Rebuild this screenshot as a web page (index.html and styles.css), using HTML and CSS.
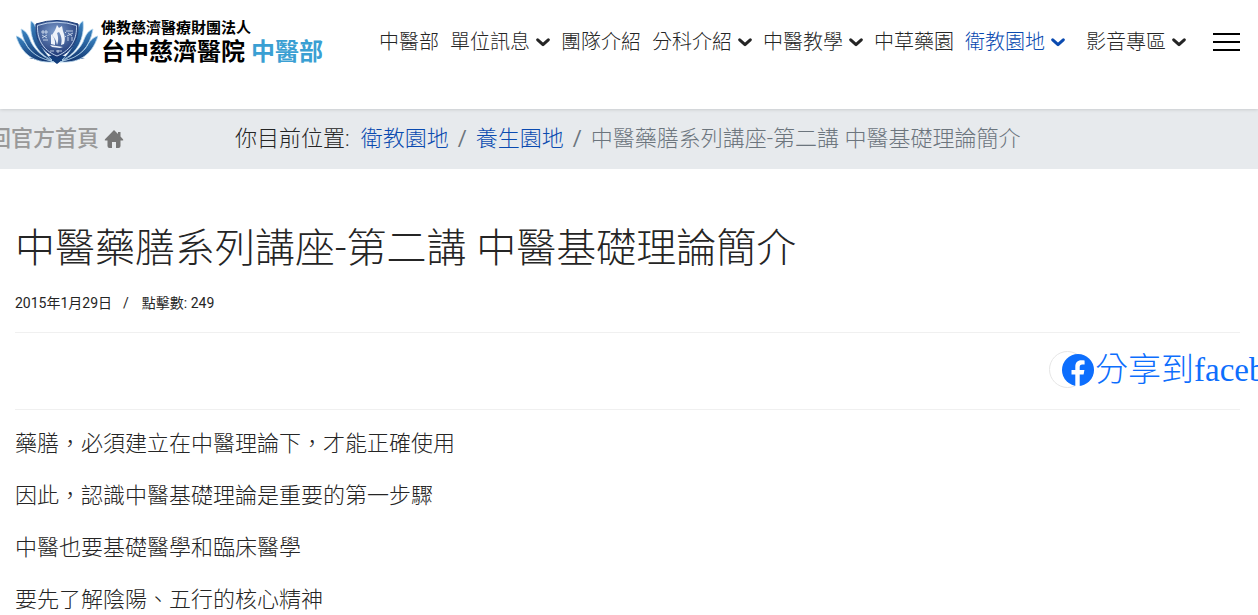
FILE: index.html
```
<!DOCTYPE html>
<html lang="zh-Hant">
  <head>
    <meta charset="UTF-8" />
    <meta name="viewport" content="width=device-width, initial-scale=1.0" />
    <title>中醫藥膳系列講座-第二講 中醫基礎理論簡介</title>
    <link rel="stylesheet" href="styles.css">
  </head>
  <body>
    <svg class="sprite" width="0" height="0" aria-hidden="true">
      <symbol id="chevron" viewBox="0 0 14 9">
        <path d="M1.700 1.800 7 6.700 12.300 1.800" fill="none" stroke="currentColor" stroke-width="3" stroke-linecap="round" stroke-linejoin="round" />
      </symbol>
    </svg>

    <header class="site-header">
      <a class="logo" href="#">
        <svg class="logo-mark" viewBox="0 0 82 44" aria-hidden="true">
          <defs>
            <linearGradient id="petal" x1="0" y1="0" x2="0" y2="1">
              <stop offset="0" stop-color="#3b86c4" />
              <stop offset="1" stop-color="#12356f" />
            </linearGradient>
            <radialGradient id="shield" cx=".45" cy=".3" r=".7">
              <stop offset="0" stop-color="#7b9bcb" />
              <stop offset="1" stop-color="#17306f" />
            </radialGradient>
            <g id="petals">
              <path d="M38 42C22 43 7 38 0 16c5 1 9 6 11 10C15 33 25 38 38 42z" />
              <path d="M36 41C18 38 8 27 5 9c6 2 8 8 10 13 4 8 12 15 21 19z" />
              <path d="M36 40C21 34 13 18 15 1c5 3 5 9 6 14 2 9 8 18 15 25z" />
            </g>
          </defs>
          <path d="M13 38q15 0 28-4 13 4 28 4-12 3-22 3-3 0-6 3-3-3-6-3-10 0-22-3z" fill="#123d7c" />
          <g fill="url(#petal)" stroke="#b8d8ef" stroke-width=".8">
            <use href="#petals" />
            <use href="#petals" transform="matrix(-1 0 0 1 82 0)" />
          </g>
          <path d="M20 4Q41-3 62 4c1 14-4 27-21 34C24 31 19 18 20 4z" fill="url(#shield)" stroke="#173a78" stroke-width="1" />
          <path d="M21.500 5.500Q41-1 60.500 5.500C61 18 56 30 41 36 26 30 21 18 21.500 5.500z" fill="none" stroke="#bcd1eb" stroke-width="1" />
          <path d="M41 5c-1 4-3 7-5 10q4 4 5 10c2-5 1-9 0-12l2-1c3 5 3 9 2 13l3-1c2-6 0-10-1-13l-1-5-3 2zM35 14q5 5 4 11l-4-1zM34 25l13 2-3 1-8-1z" fill="#eef3fa" />
          <path d="M25 12h7M27 10v4m3-4v4M26 15l5 3m0-3-5 3m1 2h5M50 11h7m-5 2 4 3m1-3-6 3m1 1v4m4-4v4M49 12l1 1m-1 3 1 1M34 31h4m2 0h6m-4-1v3" fill="none" stroke="#dce7f5" stroke-width=".8" />
        </svg>
        <span class="logo-text">
          <span class="logo-org">佛教慈濟醫療財團法人</span>
          <span class="logo-name">台中慈濟醫院<span class="logo-dept">中醫部</span></span>
        </span>
      </a>

      <nav class="main-nav">
        <a href="#">中醫部</a>
        <a href="#">單位訊息<svg class="chevron"><use href="#chevron" /></svg></a>
        <a href="#">團隊介紹</a>
        <a href="#">分科介紹<svg class="chevron"><use href="#chevron" /></svg></a>
        <a href="#">中醫教學<svg class="chevron"><use href="#chevron" /></svg></a>
        <a href="#">中草藥園</a>
        <a class="active" href="#">衛教園地<svg class="chevron"><use href="#chevron" /></svg></a>
        <a href="#">影音專區<svg class="chevron"><use href="#chevron" /></svg></a>
      </nav>

      <button class="menu-toggle" type="button" aria-label="選單">
        <span></span>
        <span></span>
        <span></span>
      </button>
    </header>

    <div class="breadcrumb-bar">
      <a class="home-link" href="#">回官方首頁<svg class="home-icon" viewBox="0 0 20 20" aria-hidden="true">
          <path d="M10 1 1 10.200q-1 1.300.6 1.300H3.500V17q0 2 2 2H8v-6h4v6h2.500q2 0 2-2v-5.500h1.900q1.600 0 .6-1.300L16.500 7.500V3H14v2z" fill="currentColor" />
        </svg></a>
      <nav class="breadcrumb">
        <span class="crumb-label">你目前位置:</span>
        <a href="#">衛教園地</a>
        <span class="divider">/</span>
        <a href="#">養生園地</a>
        <span class="divider">/</span>
        <span class="current">中醫藥膳系列講座-第二講 中醫基礎理論簡介</span>
      </nav>
    </div>

    <main class="article">
      <h1>中醫藥膳系列講座-第二講 中醫基礎理論簡介</h1>
      <div class="article-info">
        <span>2015年1月29日</span>
        <span class="info-divider">/</span>
        <span>點擊數: 249</span>
      </div>
      <div class="share-row">
        <div class="share">
          <a class="share-link" href="#">
            <svg class="fb-icon" viewBox="0 0 32 32" aria-hidden="true">
              <circle cx="16" cy="16" r="16" fill="#0d6efd" />
              <path d="M13.300 32V20.600H9.500V16h3.800v-3c0-4.600 2.300-6.700 6-6.700 1.500 0 2.600.1 3.300.3v4h-2.300c-2 0-2.600 1-2.600 2.700V16h4.700l-.8 4.600h-3.900V32z" fill="#fff" />
            </svg>
            <span>分享到facebook</span>
          </a>
        </div>
      </div>
      <div class="article-body">
        <p>藥膳，必須建立在中醫理論下，才能正確使用</p>
        <p>因此，認識中醫基礎理論是重要的第一步驟</p>
        <p>中醫也要基礎醫學和臨床醫學</p>
        <p>要先了解陰陽、五行的核心精神</p>
      </div>
    </main>
  </body>
</html>
```
FILE: styles.css
```
* {
  box-sizing: border-box;
}

body {
  margin: 0;
  overflow-x: hidden;
  background: #fff;
  color: #252525;
  font-family: Roboto, "Noto Sans CJK TC", sans-serif;
  font-size: 22px;
  font-weight: 300;
  line-height: 32px;
}

/* page scrolls without a visible bar */
body::-webkit-scrollbar {
  display: none;
}

a {
  color: #0a4ab0;
  text-decoration: none;
}

.sprite {
  position: absolute;
}

/* header */
.site-header {
  position: relative;
  display: flex;
  align-items: center;
  padding: 18px 18px 43px 16px;
  background: #fff;
  box-shadow: 0 0 4px rgba(0, 0, 0, 0.2);
}

.logo {
  display: flex;
  align-items: center;
  gap: 3px;
  color: #000;
  font-weight: 700;
  white-space: nowrap;
}

.logo-mark {
  width: 82px;
  height: 44px;
}

.logo-text {
  display: flex;
  flex-direction: column;
}

.logo-org {
  font-size: 15px;
  line-height: 20px;
}

.logo-name {
  font-size: 24px;
  line-height: 28px;
}

.logo-dept {
  margin-left: 6px;
  color: #3a9fd3;
}

.main-nav {
  display: flex;
  gap: 11px;
  margin-left: auto;
  font-size: 20px;
  white-space: nowrap;
}

.main-nav a {
  display: flex;
  align-items: center;
  color: #252525;
}

.main-nav .active {
  margin-right: 10px;
  color: #0a4ab0;
}

.chevron {
  width: 14px;
  height: 9px;
  margin-left: 6px;
}

.menu-toggle {
  display: flex;
  flex-direction: column;
  gap: 6px;
  margin-left: 27px;
  padding: 0;
  border: 0;
  background: none;
}

.menu-toggle span {
  width: 27px;
  height: 2px;
  background: #000;
}

/* breadcrumb */
.breadcrumb-bar {
  display: flex;
  align-items: center;
  padding: 14px 0;
  background: #e7eaed;
  white-space: nowrap;
}

.home-link {
  display: flex;
  justify-content: flex-end;
  align-items: center;
  gap: 5px;
  width: 124px;
  overflow: hidden;
  color: #999;
  font-weight: 500;
}

.home-icon {
  flex: none;
  width: 20px;
  height: 20px;
  color: #777;
}

.breadcrumb {
  display: flex;
  margin-left: 111px;
}

.crumb-label {
  margin-right: 11px;
}

.divider {
  padding: 0 9px;
  color: #6c757d;
  font-weight: 400;
}

.current {
  color: #6c757d;
}

/* article */
.article {
  padding: 54px 18px 0 15px;
}

h1 {
  margin: 0;
  font-size: 40px;
  font-weight: 300;
  line-height: 52px;
}

.article-info {
  display: flex;
  padding: 18px 0 19px;
  border-bottom: 1px solid #f0f0f0;
  font-size: 14px;
  font-weight: 400;
  line-height: 20px;
}

.info-divider {
  padding: 0 13px 0 11px;
}

.share-row {
  display: flex;
  justify-content: flex-end;
  padding: 18px 0 21px;
  border-bottom: 1px solid #f0f0f0;
}

.share {
  width: 191px;
}

.share-link {
  display: flex;
  align-items: center;
  gap: 1px;
  width: 37px;
  height: 37px;
  padding-left: 12px;
  border: 1px solid #e6e6e6;
  border-radius: 50%;
  color: #0d6efd;
  font-family: "Liberation Serif", "Noto Sans CJK TC", serif;
  font-size: 33px;
  white-space: nowrap;
}

.fb-icon {
  flex: none;
  width: 32px;
  height: 32px;
}

.article-body {
  padding-top: 18px;
}

.article-body p {
  margin: 0 0 20px;
}
```
